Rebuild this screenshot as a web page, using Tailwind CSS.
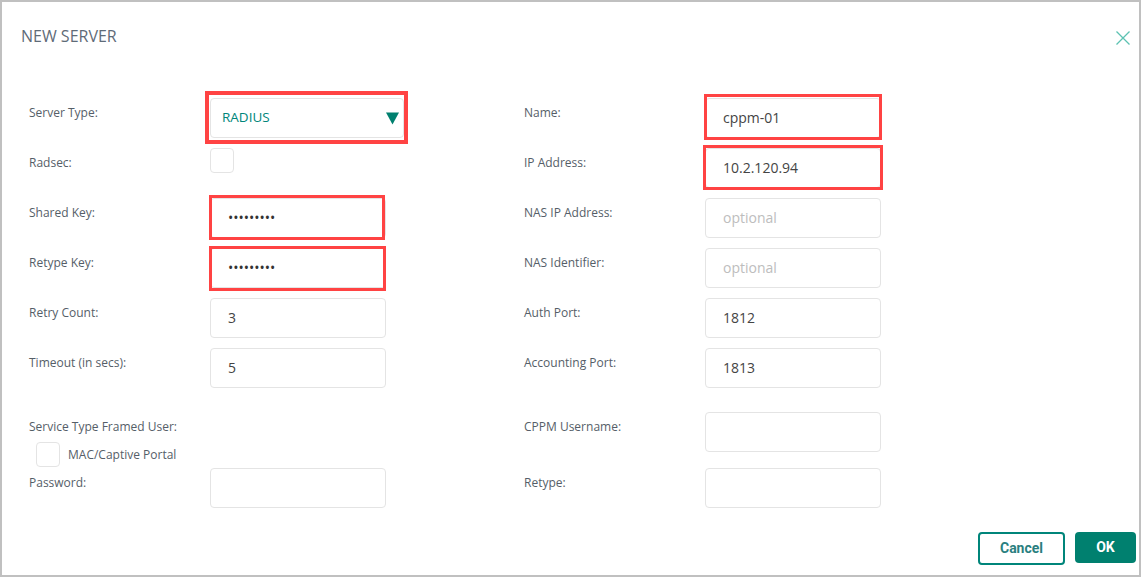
<!DOCTYPE html>
<html lang="en">
<head>
  <meta charset="UTF-8">
  <title>New Server</title>
  <script src="https://cdn.jsdelivr.net/npm/@tailwindcss/browser@4"></script>
</head>
<body class="bg-white font-['Open_Sans',sans-serif]">
  <div class="w-[1141px] h-[577px] border-2 border-[#c0c0c0] bg-white flex flex-col overflow-hidden">

    <!-- Header -->
    <div class="h-[94px] pl-[19px] pr-[9px] pt-[23px] flex justify-between items-start shrink-0">
      <h1 class="text-[16px] leading-[22px] text-[#5f6b78]">NEW SERVER</h1>
      <svg class="w-[14px] h-[14px] mt-[6px]" viewBox="0 0 14 14" fill="none" stroke="#5cc2b2" stroke-width="1.3"><path d="M.5.5l13 13M13.5.5l-13 13"/></svg>
    </div>

    <!-- Form -->
    <div class="pt-[2px] pl-[27px] flex">
      <!-- Left column -->
      <div class="w-[495px] shrink-0 flex flex-col">
        <div class="flex h-10 mb-[10px]">
          <label class="w-[181px] shrink-0 text-[12px] leading-[17px] pt-[6px] text-[#555e68]">Server Type:</label>
          <div class="relative w-[194px] h-10 border border-[#e4e4e4] rounded-[4px] flex items-center justify-between pl-[11px] pr-[4px] pb-[2px]">
            <span class="text-[13.500px] text-[#00857a]">RADIUS</span>
            <svg class="w-[13px] h-[13px] mt-[2px]" viewBox="0 0 13 13"><path d="M0 .5h13L6.500 12.500z" fill="#00806f"/></svg>
            <div class="absolute left-[-6px] right-[-5px] top-[-8px] bottom-[-7px] border-4 border-[#ff4343]"></div>
          </div>
        </div>
        <div class="flex h-10 mb-[10px]">
          <label class="w-[181px] shrink-0 text-[12px] leading-[17px] pt-[6px] text-[#555e68]">Radsec:</label>
          <div class="w-6 h-[25px] border border-[#e4e4e4] rounded-[4px]"></div>
        </div>
        <div class="flex h-10 mb-[10px]">
          <label class="w-[181px] shrink-0 text-[12px] leading-[17px] pt-[6px] text-[#555e68]">Shared Key:</label>
          <div class="relative w-[176px] h-10">
            <input type="password" value="secretkey" class="w-full h-full border border-[#e4e4e4] rounded-[4px] px-[17px] pb-[2px] text-[14px] text-[#333]">
            <div class="absolute left-[-1px] right-[1px] top-[-3px] bottom-[-2px] border-[3px] border-[#ff4343]"></div>
          </div>
        </div>
        <div class="flex h-10 mb-[10px]">
          <label class="w-[181px] shrink-0 text-[12px] leading-[17px] pt-[6px] text-[#555e68]">Retype Key:</label>
          <div class="relative w-[176px] h-10">
            <input type="password" value="secretkey" class="w-full h-full border border-[#e4e4e4] rounded-[4px] px-[17px] pb-[2px] text-[14px] text-[#333]">
            <div class="absolute left-[-1px] right-0 top-[-2px] bottom-[-3px] border-[3px] border-[#ff4343]"></div>
          </div>
        </div>
        <div class="flex h-10 mb-[10px]">
          <label class="w-[181px] shrink-0 text-[12px] leading-[17px] pt-[6px] text-[#555e68]">Retry Count:</label>
          <input type="text" value="3" class="w-[176px] h-10 border border-[#e4e4e4] rounded-[4px] px-[17px] pb-[2px] text-[14px] text-[#444]">
        </div>
        <div class="flex h-10 mb-[24px]">
          <label class="w-[181px] shrink-0 text-[12px] leading-[17px] pt-[6px] text-[#555e68]">Timeout (in secs):</label>
          <input type="text" value="5" class="w-[176px] h-10 border border-[#e4e4e4] rounded-[4px] px-[17px] pb-[2px] text-[14px] text-[#444]">
        </div>
        <div class="h-[56px]">
          <label class="block text-[12px] leading-[17px] pt-[6px] text-[#555e68]">Service Type Framed User:</label>
          <div class="flex items-center mt-[7px] pl-[7px] gap-[8px]">
            <div class="w-6 h-[25px] border border-[#e4e4e4] rounded-[4px]"></div>
            <span class="text-[12px] leading-[17px] text-[#555e68]">MAC/Captive Portal</span>
          </div>
        </div>
        <div class="flex h-10">
          <label class="w-[181px] shrink-0 text-[12px] leading-[17px] pt-[6px] text-[#555e68]">Password:</label>
          <input type="password" class="w-[176px] h-10 border border-[#e4e4e4] rounded-[4px] px-[17px] pb-[2px] text-[14px]">
        </div>
      </div>

      <!-- Right column -->
      <div class="w-[357px] shrink-0 flex flex-col">
        <div class="flex h-10 mb-[10px]">
          <label class="w-[181px] shrink-0 text-[12px] leading-[17px] pt-[6px] text-[#555e68]">Name:</label>
          <div class="relative w-[176px] h-10">
            <input type="text" value="cppm-01" class="w-full h-full border border-[#e4e4e4] rounded-[4px] px-[17px] pb-[2px] text-[14px] text-[#444]">
            <div class="absolute left-[-1px] right-[-1px] top-[-4px] bottom-[-2px] border-[3px] border-[#ff4343]"></div>
          </div>
        </div>
        <div class="flex h-10 mb-[10px]">
          <label class="w-[181px] shrink-0 text-[12px] leading-[17px] pt-[6px] text-[#555e68]">IP Address:</label>
          <div class="relative w-[176px] h-10">
            <input type="text" value="10.2.120.94" class="w-full h-full border border-[#e4e4e4] rounded-[4px] px-[17px] pb-[2px] text-[14px] text-[#444]">
            <div class="absolute left-[-2px] right-[-2px] top-[-3px] bottom-[-2px] border-[3px] border-[#ff4343]"></div>
          </div>
        </div>
        <div class="flex h-10 mb-[10px]">
          <label class="w-[181px] shrink-0 text-[12px] leading-[17px] pt-[6px] text-[#555e68]">NAS IP Address:</label>
          <input type="text" placeholder="optional" class="w-[176px] h-10 border border-[#e4e4e4] rounded-[4px] px-[17px] pb-[2px] text-[14px] placeholder:text-[#bdbdbd]">
        </div>
        <div class="flex h-10 mb-[10px]">
          <label class="w-[181px] shrink-0 text-[12px] leading-[17px] pt-[6px] text-[#555e68]">NAS Identifier:</label>
          <input type="text" placeholder="optional" class="w-[176px] h-10 border border-[#e4e4e4] rounded-[4px] px-[17px] pb-[2px] text-[14px] placeholder:text-[#bdbdbd]">
        </div>
        <div class="flex h-10 mb-[10px]">
          <label class="w-[181px] shrink-0 text-[12px] leading-[17px] pt-[6px] text-[#555e68]">Auth Port:</label>
          <input type="text" value="1812" class="w-[176px] h-10 border border-[#e4e4e4] rounded-[4px] px-[17px] pb-[2px] text-[14px] text-[#444]">
        </div>
        <div class="flex h-10 mb-[24px]">
          <label class="w-[181px] shrink-0 text-[12px] leading-[17px] pt-[6px] text-[#555e68]">Accounting Port:</label>
          <input type="text" value="1813" class="w-[176px] h-10 border border-[#e4e4e4] rounded-[4px] px-[17px] pb-[2px] text-[14px] text-[#444]">
        </div>
        <div class="flex h-10 mb-[16px]">
          <label class="w-[181px] shrink-0 text-[12px] leading-[17px] pt-[6px] text-[#555e68]">CPPM Username:</label>
          <input type="text" class="w-[176px] h-10 border border-[#e4e4e4] rounded-[4px] px-[17px] pb-[2px] text-[14px]">
        </div>
        <div class="flex h-10">
          <label class="w-[181px] shrink-0 text-[12px] leading-[17px] pt-[6px] text-[#555e68]">Retype:</label>
          <input type="password" class="w-[176px] h-10 border border-[#e4e4e4] rounded-[4px] px-[17px] pb-[2px] text-[14px]">
        </div>
      </div>
    </div>

    <!-- Footer -->
    <div class="flex justify-end items-start gap-[10px] pr-[3px] mt-[24px] font-['Roboto',sans-serif]">
      <button class="w-[87px] h-[33px] border-2 border-[#00857a] rounded-[4px] text-[14px] font-bold text-[#2a7f80]">Cancel</button>
      <button class="w-[61px] h-[31px] bg-[#00806f] rounded-[4px] text-[14px] font-bold text-white">OK</button>
    </div>
  </div>
</body>
</html>
